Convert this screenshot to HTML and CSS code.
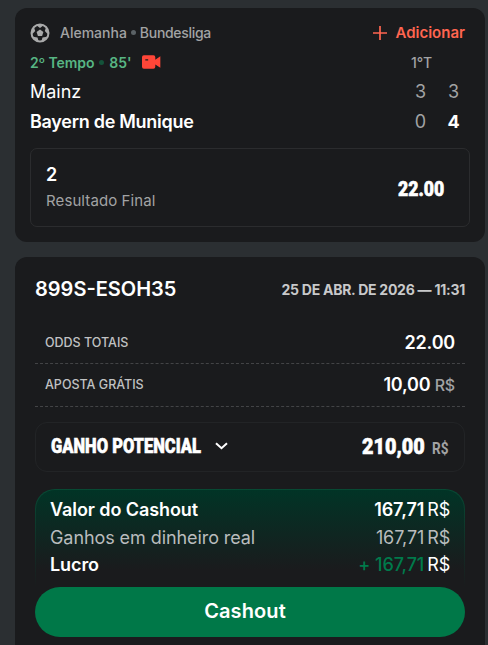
FILE: index.html
```
<!DOCTYPE html>
<html lang="pt-br">
<head>
    <meta charset="UTF-8">
    <meta name="viewport" content="width=device-width, initial-scale=1.0">
    <title>Cashout</title>
    <link rel="stylesheet" href="styles.css">
</head>
<body>
    <section class="card evento">
        <div class="liga">
            <svg class="bola" width="20" height="20" viewBox="0 0 20 20">
                <circle cx="10" cy="10" r="8.5" fill="none" stroke="#a9aaaa" stroke-width="2"/>
                <path fill="#a9aaaa" d="M10 6.600l3.400 2.500-1.300 3.900H7.900L6.600 9.100zM6 2h8L10 5zM1.300 9l2.400-5.500 1.500 4.600-2.800 2.800zM18.700 9l-2.400-5.500-1.500 4.600 2.800 2.800zM3 13.800l4.500.6 1.200 4.200-3.500-1zM17 13.800l-4.500.6-1.200 4.200 3.500-1z"/>
            </svg>
            <span class="pais">Alemanha</span>
            <span class="ponto"></span>
            <span>Bundesliga</span>
            <span class="adicionar">
                <svg width="14" height="14" viewBox="0 0 14 14"><path d="M7 0v14M0 7h14" stroke="#ff6550" stroke-width="1.7"/></svg>
                Adicionar
            </span>
        </div>
        <div class="tempo">
            <span>2º Tempo</span>
            <span class="ponto verde"></span>
            <span>85'</span>
            <svg class="camera" width="19" height="14" viewBox="0 0 20 14">
                <path fill="#ff4638" fill-rule="evenodd" d="M2 0h10q2 0 2 2v2.500L19.300 1v12L14 9.500V12q0 2-2 2H2q-2 0-2-2V2q0-2 2-2zM3.500 4v1.300h3V4z"/>
            </svg>
            <span class="periodo">1°T</span>
        </div>
        <div class="time">
            <span class="nome">Mainz</span>
            <span class="gol">3</span>
            <span class="gol">3</span>
        </div>
        <div class="time">
            <span class="nome forte">Bayern de Munique</span>
            <span class="gol">0</span>
            <span class="gol forte">4</span>
        </div>
        <div class="selecao">
            <div>
                <div class="escolha">2</div>
                <div class="mercado">Resultado Final</div>
            </div>
            <span class="estreito odd"><span>22.00</span></span>
        </div>
    </section>

    <section class="card bilhete">
        <div class="topo">
            <span class="codigo">899S-ESOH35</span>
            <span class="data">25 DE ABR. DE 2026 — 11:31</span>
        </div>
        <div class="linha">
            <span>ODDS TOTAIS</span>
            <span class="valor">22.00</span>
        </div>
        <div class="linha segunda">
            <span>APOSTA GRÁTIS</span>
            <span class="valor">10,00 <small>R$</small></span>
        </div>
        <div class="ganho">
            <span class="estreito titulo"><span>GANHO POTENCIAL</span></span>
            <svg width="13" height="8" viewBox="0 0 13 8"><path d="M1 1.200l5.500 5 5.500-5" fill="none" stroke="#fff" stroke-width="2"/></svg>
            <span class="estreito total"><span>210,00</span></span>
            <span class="estreito moeda"><span>R$</span></span>
        </div>
        <div class="cashout">
            <div class="item forte">
                <span>Valor do Cashout</span>
                <span class="quantia">167,71</span>
                <span class="real">R$</span>
            </div>
            <div class="item apagado">
                <span>Ganhos em dinheiro real</span>
                <span class="quantia">167,71</span>
                <span class="real">R$</span>
            </div>
            <div class="item lucro">
                <span class="forte">Lucro</span>
                <span class="quantia">+ 167,71</span>
                <span class="real">R$</span>
            </div>
        </div>
        <button class="botao">Cashout</button>
    </section>
</body>
</html>
```
FILE: styles.css
```
* {
    box-sizing: border-box;
}

body {
    margin: 0;
    padding: 8px 3px 0 15px;
    height: 645px;
    overflow: hidden;
    background: #2b2f32;
    color: #fff;
    font-family: Inter, "Liberation Sans", sans-serif;
}

.card {
    background: #1a1b1d;
    border-radius: 12px;
}

.evento {
    height: 234px;
    padding: 14px 15px 0;
}

.liga {
    display: flex;
    align-items: center;
    height: 21px;
    color: #a2a3a4;
    font-size: 14px;
    font-weight: 500;
    letter-spacing: -.3px;
}

.pais {
    margin-left: 10px;
    letter-spacing: 0;
}

.ponto {
    width: 5px;
    height: 5px;
    margin: 0 5px;
    border-radius: 50%;
    background: #5b6266;
}

.liga .ponto {
    margin: 0 4px;
}

.adicionar {
    display: flex;
    align-items: center;
    gap: 8px;
    margin-left: auto;
    padding-right: 5px;
    color: #ff6550;
    font-size: 15px;
    font-weight: 600;
    letter-spacing: 0;
}

.tempo {
    display: flex;
    align-items: center;
    height: 20px;
    margin-top: 9px;
    color: #57b583;
    font-size: 14px;
    font-weight: 600;
    letter-spacing: -.1px;
}

.ponto.verde {
    background: #14533a;
}

.camera {
    margin-left: 11px;
}

.periodo {
    margin-left: auto;
    padding-right: 38px;
    color: #a2a3a4;
    font-weight: 500;
}

.time {
    display: flex;
    align-items: center;
    height: 30px;
    font-size: 18px;
}

.tempo + .time {
    margin-top: 4px;
}

.nome {
    flex: 1;
}

.nome.forte {
    letter-spacing: -.28px;
}

.forte {
    font-weight: 600;
}

.gol {
    width: 33px;
    color: #a2a3a4;
    text-align: center;
}

.gol.forte {
    color: #fff;
    font-weight: 700;
}

.selecao {
    display: flex;
    align-items: center;
    justify-content: space-between;
    height: 79px;
    margin-top: 12px;
    padding: 2px 24px 0 15px;
    border: 1px solid #2b2c2e;
    border-radius: 7px;
}

.escolha {
    font-size: 18px;
    font-weight: 600;
    line-height: 24px;
}

.mercado {
    color: #a2a3a4;
    font-size: 15px;
    letter-spacing: .1px;
    line-height: 28px;
}

/* condensed headings */
.estreito {
    display: block;
    font-family: Roboto, "Liberation Sans", sans-serif;
    font-weight: 900;
    white-space: nowrap;
    -webkit-text-stroke: .6px currentColor;
}

.estreito span {
    display: inline-block;
    transform-origin: left center;
}

.odd {
    width: 47px;
    font-size: 20px;
}

.odd span {
    transform: scaleX(.88);
}

.bilhete {
    height: 400px;
    margin-top: 15px;
    padding: 20px 20px 0;
}

.topo {
    display: flex;
    align-items: center;
    justify-content: space-between;
    height: 24px;
}

.codigo {
    font-size: 20px;
    font-weight: 600;
}

.data {
    color: #c8c9ca;
    font-size: 14px;
    font-weight: 700;
    letter-spacing: -.25px;
}

.linha {
    display: flex;
    align-items: center;
    justify-content: space-between;
    height: 43px;
    margin-top: 20px;
    padding: 0 10px;
    border-bottom: 1px dashed #434446;
    color: #c1c2c3;
    font-size: 12.5px;
    font-weight: 500;
}

.linha.segunda {
    margin-top: 0;
    padding-bottom: 1px;
}

.valor {
    color: #fff;
    font-size: 18px;
    font-weight: 600;
    letter-spacing: -.2px;
}

.valor small {
    color: #a2a3a4;
    font-size: 16px;
    font-weight: 500;
}

.ganho {
    display: flex;
    align-items: center;
    height: 50px;
    margin-top: 15px;
    padding: 0 15px 2px;
    border: 1px solid #222426;
    border-radius: 12px;
}

.titulo {
    width: 164px;
    font-size: 20px;
}

.titulo span {
    transform: scaleX(.825);
}

.total {
    width: 70px;
    margin-left: auto;
    font-size: 22px;
}

.total span {
    transform: scaleX(.9);
}

.moeda {
    width: 17px;
    padding-top: 3px;
    color: #a2a3a4;
    font-size: 17px;
    font-weight: 700;
    -webkit-text-stroke: 0;
}

.moeda span {
    transform: scaleX(.8);
}

.cashout {
    height: 98px;
    margin-top: 17px;
    padding: 5px 14px 0;
    border: 1px solid transparent;
    border-bottom: 0;
    border-radius: 20px 20px 0 0;
    background: linear-gradient(#013426, #1a1b1d 82%) padding-box, linear-gradient(#074a34, #1a1b1d) border-box;
}

.item {
    display: flex;
    align-items: center;
    height: 28px;
    font-size: 18px;
    letter-spacing: -.08px;
}

.quantia {
    margin-left: auto;
}

.real {
    margin-left: 3px;
    font-weight: 400;
    letter-spacing: -.2px;
}

.apagado {
    color: #b9bcbd;
}

.lucro {
    height: 27px;
}

.lucro .quantia {
    color: #007a4b;
    font-weight: 500;
}

.botao {
    display: block;
    width: 100%;
    height: 50px;
    padding: 0 10px 2px 0;
    border: 0;
    border-radius: 25px;
    background: #007848;
    color: #fff;
    font-family: inherit;
    font-size: 20px;
    font-weight: 600;
    letter-spacing: .1px;
}
```
